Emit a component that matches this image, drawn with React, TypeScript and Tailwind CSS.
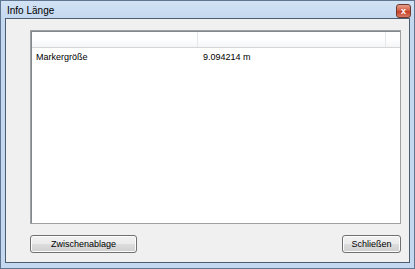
import React from "react";

const rows = [{ name: "Markergröße", value: "9.094214 m" }];

function WinButton({ label, className = "" }: { label: string; className?: string }) {
  return (
    <button
      type="button"
      className={[
        "h-[18px] rounded-[3px] border border-[#707070] bg-[linear-gradient(#f2f2f2_0%,#ebebeb_50%,#dddddd_51%,#cfcfcf_100%)] text-[9px] leading-none text-black shadow-[inset_0_0_0_1px_#fcfcfc]",
        className,
      ].join(" ")}
    >
      {label}
    </button>
  );
}

export default function App() {
  return (
    <div className="flex h-[269px] w-[415px] flex-col border border-[#5f7590] bg-[#c4d8ef] font-['Liberation_Sans',Arial,sans-serif]">
      {/* title bar */}
      <div className="flex h-[17px] items-center justify-between bg-[linear-gradient(#d3e3f5,#c4d8ef)] pl-[6px] pr-[3px]">
        <span className="pt-[2px] text-[10px] text-black">Info Länge</span>
        <div className="mt-[3px] flex h-[14px] w-[15px] items-center justify-center rounded-[3px] border border-[#6d3a30] bg-[linear-gradient(#e8a08c,#d0593f_50%,#c43c22_51%,#d87862)] text-[9px] font-bold leading-none text-white">
          x
        </div>
      </div>

      {/* client area */}
      <div className="mx-[4px] flex flex-1 flex-col border border-[#4c5d72] bg-[#f0f0f0] pl-[24px] pr-[8px] pt-[11px]">
        <div className="flex h-[194px] flex-col border border-[#a0a0a0] bg-white shadow-[inset_1px_1px_0_#828790]">
          <div className="ml-[1px] mt-[1px] flex h-[16px] border-b border-[#d5d5d5] bg-[linear-gradient(#ffffff_0%,#ffffff_45%,#f4f5f7_100%)]">
            <div className="w-[166px] border-r border-[#e3e8ee]" />
            <div className="w-[188px] border-r border-[#e3e8ee]" />
            <div className="flex-1" />
          </div>
          {rows.map((r) => (
            <div key={r.name} className="ml-[1px] flex h-[20px] items-center text-[9px] text-black">
              <div className="w-[167px] pl-[4px]">{r.name}</div>
              <div className="pl-[4px]">{r.value}</div>
            </div>
          ))}
        </div>
        <div className="mt-[11px] flex justify-between">
          <WinButton label="Zwischenablage" className="w-[107px]" />
          <WinButton label="Schließen" className="w-[59px]" />
        </div>
      </div>

      {/* bottom frame */}
      <div className="h-[5px]" />
    </div>
  );
}
